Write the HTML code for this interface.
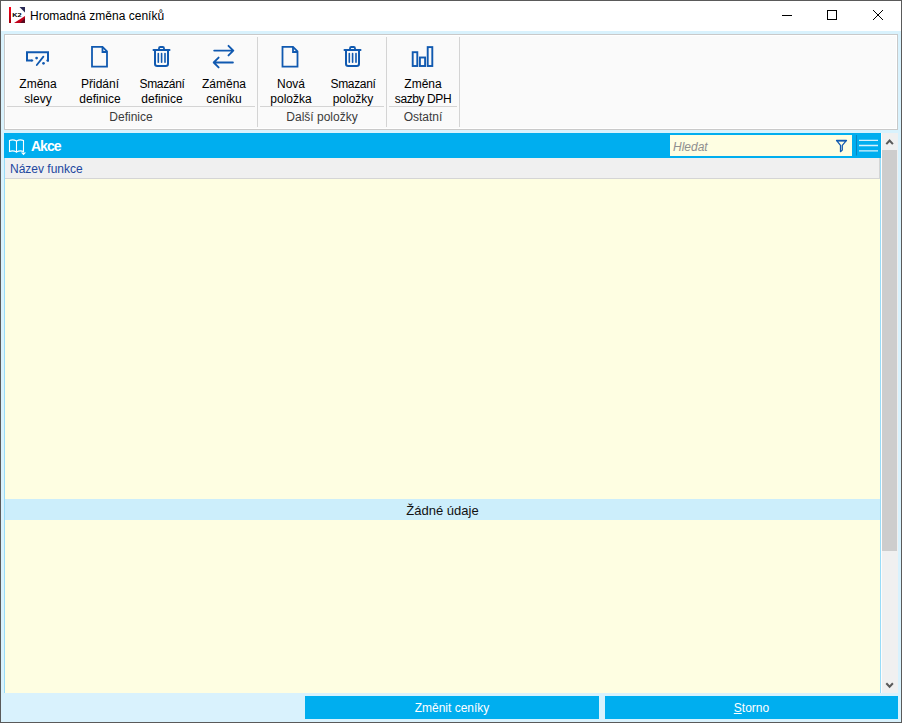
<!DOCTYPE html>
<html><head><meta charset="utf-8">
<style>
*{margin:0;padding:0;box-sizing:border-box}
html,body{width:902px;height:723px;overflow:hidden}
body{position:relative;background:#d9f2fd;font-family:"Liberation Sans",sans-serif;font-size:12px;color:#000}
.a{position:absolute}
#bl{left:0;top:0;width:1px;height:723px;background:#5a5a5a}
#br{left:901px;top:0;width:1px;height:723px;background:#5a5a5a}
#bt{left:0;top:0;width:902px;height:1px;background:#5a5a5a}
#bb{left:0;top:722px;width:902px;height:1px;background:#5a5a5a}
#title{left:1px;top:1px;width:900px;height:30px;background:#fff}
#ttext{left:30px;top:9px;font-size:12px;line-height:15px;white-space:nowrap;color:#000}
#ribbon{left:4px;top:34px;width:894px;height:96px;background:#fafafa;border:1px solid #c9c9c9;box-shadow:inset 0 0 0 1px #fff}
.lbl{position:absolute;text-align:center;line-height:15px;white-space:nowrap;color:#000}
.glbl{position:absolute;text-align:center;line-height:15px;white-space:nowrap;color:#3b3b3b}
.vsep{position:absolute;top:37px;width:1px;height:90px;background:#d4d4d4}
.hsep{position:absolute;top:106px;height:1px;background:#d4d4d4}
svg.ic{position:absolute;overflow:visible}
#hdr{left:4px;top:133px;width:877px;height:25px;background:#00aeef}
#akce{left:31px;top:138px;font-size:14px;letter-spacing:-1px;font-weight:bold;color:#fff;line-height:16px}
#search{left:670px;top:135px;width:182px;height:21px;background:#fefee2}
#hledat{left:673px;top:140px;font-style:italic;color:#8f8f8f;font-size:12px;line-height:15px}
#colhdr{left:5px;top:158px;width:875px;height:21px;background:#f0f0f0;border-bottom:1px solid #d5d5d5}
#coltext{left:10px;top:162px;color:#22479f;line-height:15px}
#gl{left:4px;top:158px;width:1px;height:535px;background:#99dcf8}
#gr{left:880px;top:158px;width:1px;height:535px;background:#99dcf8}
#gw{left:881px;top:133px;width:1px;height:560px;background:#fdfdfd}
#yel{left:5px;top:179px;width:875px;height:514px;background:#fefee2}
#colsep{left:879px;top:158px;width:1px;height:21px;background:#d5d5d5}
#band{left:5px;top:499px;width:875px;height:21px;background:#cceefb}
#bandt{left:5px;top:503px;width:875px;text-align:center;font-size:13px;line-height:16px;color:#111}
#sb{left:882px;top:133px;width:16px;height:560px;background:#f0f0f0}
#thumb{left:882px;top:150px;width:15px;height:401px;background:#cdcdcd}
.btn{position:absolute;top:696px;height:23px;background:#00aeef;color:#fff;text-align:center;line-height:15px;padding-top:5px}
</style></head><body>
<div class="a" id="title"></div>
<div class="a" id="bt"></div><div class="a" id="bb"></div><div class="a" id="bl"></div><div class="a" id="br"></div>
<!-- K2 logo -->
<svg class="ic" style="left:8px;top:6px" width="18" height="18" viewBox="0 0 18 18">
 <defs><linearGradient id="rg" x1="0" y1="0" x2="0" y2="1"><stop offset="0" stop-color="#ff0018"/><stop offset="1" stop-color="#a0000c"/></linearGradient></defs>
 <rect x="1" y="1" width="2" height="16" fill="url(#rg)"/>
 <polygon points="11.5,1 17,1 17,6.5" fill="#2a2a55"/>
 <polygon points="6,17 17,17 17,10" fill="#c0001a"/>
 <polygon points="12,17 17,17 17,12" fill="#5a0a20"/>
 <text x="4.3" y="10.9" font-family="Liberation Sans" font-weight="bold" font-size="5.9" textLength="9.4" lengthAdjust="spacingAndGlyphs" fill="#000">K2</text>
</svg>
<div class="a" id="ttext">Hromadná změna ceníků</div>
<!-- window controls -->
<div class="a" style="left:782px;top:15px;width:10px;height:1px;background:#000"></div>
<div class="a" style="left:827px;top:10px;width:10px;height:10px;border:1px solid #000"></div>
<svg class="ic" style="left:872px;top:9px" width="12" height="12" viewBox="0 0 12 12"><path d="M1 1L11 11M11 1L1 11" stroke="#000" stroke-width="1"/></svg>

<div class="a" id="ribbon"></div>
<div class="vsep" style="left:257px"></div>
<div class="vsep" style="left:386px"></div>
<div class="vsep" style="left:459px"></div>
<div class="hsep" style="left:7px;width:248px"></div>
<div class="hsep" style="left:260px;width:124px"></div>
<div class="hsep" style="left:389px;width:68px"></div>

<div class="lbl" style="left:7px;width:62px;top:77px">Změna<br>slevy</div>
<div class="lbl" style="left:69px;width:62px;top:77px">Přidání<br>definice</div>
<div class="lbl" style="left:131px;width:62px;top:77px"><span style="letter-spacing:-0.35px">Smazání</span><br>definice</div>
<div class="lbl" style="left:193px;width:62px;top:77px">Záměna<br>ceníku</div>
<div class="lbl" style="left:260px;width:62px;top:77px">Nová<br>položka</div>
<div class="lbl" style="left:322px;width:62px;top:77px"><span style="letter-spacing:-0.35px">Smazaní</span><br>položky</div>
<div class="lbl" style="left:389px;width:68px;top:77px">Změna<br><span style="letter-spacing:-0.4px">sazby DPH</span></div>
<div class="glbl" style="left:5px;width:252px;top:110px">Definice</div>
<div class="glbl" style="left:258px;width:128px;top:110px">Další položky</div>
<div class="glbl" style="left:387px;width:72px;top:110px">Ostatní</div>

<div class="a" id="hdr"></div>
<div class="a" id="akce">Akce</div>
<div class="a" id="search"></div>
<div class="a" id="hledat">Hledat</div>
<div class="a" id="colhdr"></div>
<div class="a" id="coltext">Název funkce</div>
<div class="a" id="colsep"></div>
<div class="a" id="yel"></div>
<div class="a" id="gl"></div><div class="a" id="gr"></div><div class="a" id="gw"></div>
<div class="a" id="band"></div>
<div class="a" id="bandt">Žádné údaje</div>
<div class="a" id="sb"></div>
<div class="a" id="thumb"></div>


<!-- ribbon icons -->
<svg class="ic" style="left:0;top:0" width="902" height="130" viewBox="0 0 902 130" fill="none" stroke="#1059b0">
 <!-- zmena slevy -->
 <path d="M32 60.4H27V52.3H48V61.4" stroke-width="2"/><path d="M31.8 60.4H32.3" stroke-width="2" stroke-linecap="round"/><path d="M47.3 60.4H48" stroke-width="2" stroke-linecap="round"/>
 <path d="M36.8 65L43.4 56.6" stroke-width="1.8" stroke-linecap="round"/>
 <circle cx="36.6" cy="58.1" r="1.35" fill="#1059b0" stroke="none"/>
 <circle cx="43.5" cy="63.3" r="1.35" fill="#1059b0" stroke="none"/>
 <!-- doc -->
 <path d="M92 46.8H102.5L107 51.3V66.7H92Z" stroke-width="1.8" stroke-linejoin="miter"/>
 <path d="M102.5 47V52H107" stroke-width="1.8"/>
 <!-- trash -->
 <path d="M153.5 50H169.5" stroke-width="2" stroke-linecap="round"/>
 <path d="M159 49.5V48.3Q159 47 160.3 47H162.7Q164 47 164 48.3V49.5" stroke-width="1.8"/>
 <path d="M155 50V63.8Q155 66 157.2 66H165.8Q168 66 168 63.8V50" stroke-width="2"/>
 <path d="M158.3 53.5V62.3M161.6 53.5V62.3M165 53.5V62.3" stroke-width="1.6" stroke-linecap="round"/>
 <!-- swap -->
 <path d="M214.2 50.6H233.3M228.5 45.8L233.3 50.6L228.5 55.4" stroke-width="1.9" stroke-linecap="round" stroke-linejoin="round"/>
 <path d="M232.9 62.5H213.7M218.6 57.6L213.7 62.5L218.6 67.4" stroke-width="1.9" stroke-linecap="round" stroke-linejoin="round"/>
 <!-- doc 2 -->
 <path d="M282.5 46.8H293L297.5 51.3V66.7H282.5Z" stroke-width="1.8" stroke-linejoin="miter"/>
 <path d="M293 47V52H297.5" stroke-width="1.8"/>
 <!-- trash 2 -->
 <path d="M344.5 50H360.5" stroke-width="2" stroke-linecap="round"/>
 <path d="M350 49.5V48.3Q350 47 351.3 47H353.7Q355 47 355 48.3V49.5" stroke-width="1.8"/>
 <path d="M346 50V63.8Q346 66 348.2 66H356.8Q359 66 359 63.8V50" stroke-width="2"/>
 <path d="M349.3 53.5V62.3M352.6 53.5V62.3M356 53.5V62.3" stroke-width="1.6" stroke-linecap="round"/>
 <!-- chart -->
 <rect x="412.7" y="52.2" width="4.6" height="13.8" stroke-width="1.9"/>
 <rect x="419.9" y="57.5" width="5.2" height="8.5" stroke-width="1.9"/>
 <rect x="427.7" y="47.1" width="4.6" height="18.9" stroke-width="1.9"/>
</svg>
<!-- header icons -->
<svg class="ic" style="left:0;top:0" width="902" height="160" viewBox="0 0 902 160" fill="none">
 <path d="M9.5 140.5Q13 139 16.5 141Q20 139 23.5 140.5V151.5Q20 150 16.5 152Q13 150 9.5 151.5Z" stroke="#fff" stroke-width="1.1"/>
 <path d="M16.5 141V152.5" stroke="#fff" stroke-width="1.1"/>
 <path d="M21 152.5H26L23.5 155.3Z" fill="#fff"/>
 <path d="M836.9 140.9H846.1L842.3 145.3V150.1L840.5 151.7V145.3Z" stroke="#1059b0" stroke-width="1.25" stroke-linejoin="round"/>
 <path d="M836.6 140.6H846.4" stroke="#1059b0" stroke-width="1.5" stroke-linecap="round"/>
 <path d="M856.5 135V155.5" stroke="#0a84c0" stroke-width="1"/>
 <path d="M859 140.4H878M859 145.5H878M859 150.8H878" stroke="#d7f3fd" stroke-width="1.3"/>
 <path d="M886.3 144.2L889.6 140.5L892.9 144.2" stroke="#5a5a5a" stroke-width="2"/>
 <path d="M886.3 683.2L889.6 686.7L892.9 683.2" stroke="#5a5a5a" stroke-width="2"/>
</svg>

<div class="btn" style="left:305px;width:294px">Změnit ceníky</div>
<div class="btn" style="left:605px;width:293px"><u>S</u>torno</div>
</body></html>
